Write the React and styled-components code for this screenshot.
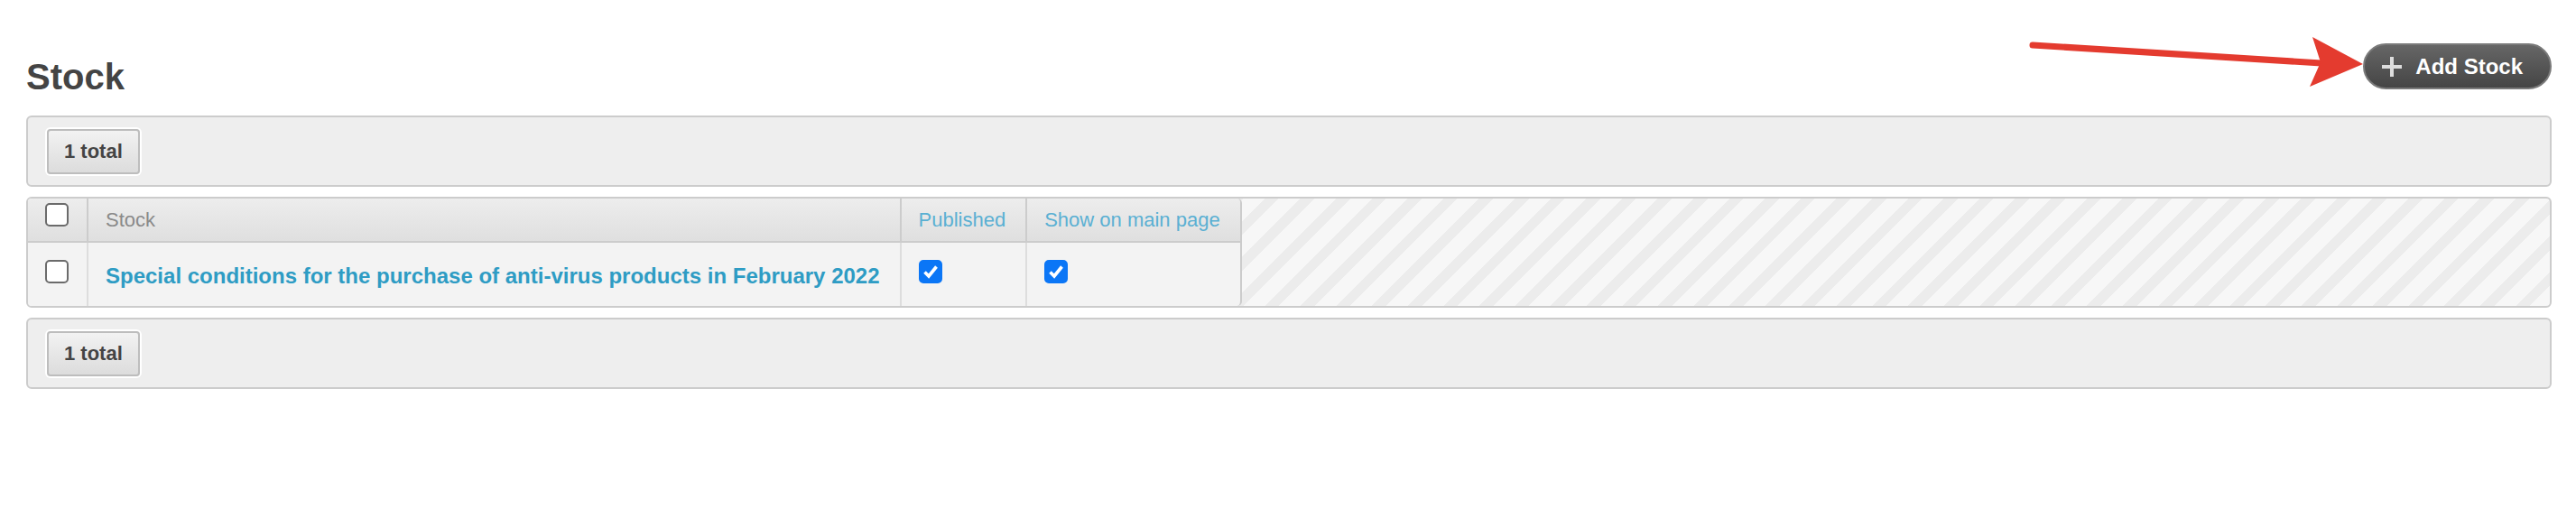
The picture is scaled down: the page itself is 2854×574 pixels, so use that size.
import React from "react"
import styled, { createGlobalStyle } from "styled-components"

const GlobalStyle = createGlobalStyle`
  body {
    margin: 0;
    background: #fff;
    font-family: "Liberation Sans", Arial, Helvetica, sans-serif;
  }
`

const Page = styled.div`
  position: relative;
  padding: 48px 27px 40px 29px;
  display: flex;
  flex-direction: column;
  gap: 11px;
`

const Header = styled.div`
  display: flex;
  justify-content: space-between;
  align-items: flex-start;
  margin-bottom: 8px;
`

const Title = styled.h1`
  margin: 13px 0 0;
  font-size: 40px;
  line-height: 48px;
  font-weight: bold;
  color: #444;
`

const AddButton = styled.button`
  display: flex;
  align-items: center;
  gap: 14px;
  height: 51px;
  padding: 0 30px 0 18px;
  border: 2px solid #7a7a7a;
  border-radius: 26px;
  background: linear-gradient(#666, #454545);
  color: #fff;
  font-family: inherit;
  font-size: 24px;
  font-weight: bold;
  cursor: pointer;
`

const Arrow = styled.svg`
  position: absolute;
  left: 2240px;
  top: 30px;
  pointer-events: none;
`

const Toolbar = styled.div`
  border: 2px solid #ccc;
  border-radius: 6px;
  background: #eee;
  padding: 13px 21px 12px;
`

const TotalButton = styled.button`
  height: 50px;
  padding: 0 17px;
  border: 2px solid #bdbdbd;
  border-radius: 4px;
  background: linear-gradient(#f2f2f2, #dcdcdc);
  box-shadow: 0 0 0 2px #fff;
  color: #444;
  font-family: inherit;
  font-size: 22px;
  font-weight: bold;
`

const Grid = styled.div`
  border: 2px solid #ccc;
  border-radius: 6px;
  overflow: hidden;
  background: repeating-linear-gradient(135deg, #f7f7f7 0 17px, #ececec 17px 28px);
`

const Table = styled.table`
  border-collapse: separate;
  border-spacing: 0;
  background: #f3f3f3;
  border-right: 2px solid #ccc;
  border-radius: 0 5px 5px 0;
  overflow: hidden;
`

const Th = styled.th`
  box-sizing: border-box;
  height: 49px;
  padding: ${(p) => (p.$box ? "5px 20px 0 19px" : "0 22px 0 19px")};
  vertical-align: ${(p) => (p.$box ? "top" : "middle")};
  background: linear-gradient(#ededed, #dfdfdf);
  border-bottom: 2px solid #ccc;
  border-left: ${(p) => (p.$box ? "none" : "2px solid #ccc")};
  text-align: left;
  font-size: 22px;
  font-weight: normal;
  white-space: nowrap;
  color: ${(p) => (p.$sortable ? "#5ab0d3" : "#8a8a8a")};
`

const Td = styled.td`
  box-sizing: border-box;
  height: 70px;
  padding: ${(p) => (p.$box ? "19px 20px 0 19px" : "3px 22px 0 19px")};
  vertical-align: ${(p) => (p.$box ? "top" : "middle")};
  border-left: ${(p) => (p.$first ? "none" : "2px solid #ddd")};
  white-space: nowrap;
`

const Link = styled.a`
  color: #2e9cc4;
  font-size: 24px;
  font-weight: bold;
  text-decoration: none;
`

const Box = styled.span`
  box-sizing: border-box;
  display: flex;
  align-items: center;
  justify-content: center;
  width: 26px;
  height: 26px;
  border: 2px solid ${(p) => (p.$checked ? "#0b76f6" : "#6b6b6b")};
  border-radius: 5px;
  background: ${(p) => (p.$checked ? "#0b76f6" : "#fff")};
`

const Checkbox = ({ checked }) => (
  <Box $checked={checked}>
    {checked && (
      <svg width="20" height="20" viewBox="0 0 20 20">
        <path d="M3.5 10.5 L8 15 L16.5 4.5" fill="none" stroke="#fff" strokeWidth="3.6" />
      </svg>
    )}
  </Box>
)

const Plus = () => (
  <svg width="24" height="24" viewBox="0 0 24 24">
    <rect x="10" y="1" width="4" height="22" fill="#ddd" />
    <rect x="1" y="10" width="22" height="4" fill="#ddd" />
  </svg>
)

export default function App() {
  return (
    <Page>
      <GlobalStyle />
      <Header>
        <Title>Stock</Title>
        <AddButton>
          <Plus />
          Add Stock
        </AddButton>
      </Header>
      <Arrow width="390" height="80" viewBox="2240 30 390 80">
        <line x1="2252" y1="50" x2="2572" y2="70" stroke="#e43b2f" strokeWidth="7" strokeLinecap="round" />
        <polygon points="2562,41 2618,71 2559,96 2571,69" fill="#e43b2f" />
      </Arrow>
      <Toolbar>
        <TotalButton>1 total</TotalButton>
      </Toolbar>
      <Grid>
        <Table>
          <thead>
            <tr>
              <Th $box>
                <Checkbox />
              </Th>
              <Th>Stock</Th>
              <Th $sortable>Published</Th>
              <Th $sortable>Show on main page</Th>
            </tr>
          </thead>
          <tbody>
            <tr>
              <Td $box $first>
                <Checkbox />
              </Td>
              <Td>
                <Link href="#">Special conditions for the purchase of anti-virus products in February 2022</Link>
              </Td>
              <Td $box>
                <Checkbox checked />
              </Td>
              <Td $box>
                <Checkbox checked />
              </Td>
            </tr>
          </tbody>
        </Table>
      </Grid>
      <Toolbar>
        <TotalButton>1 total</TotalButton>
      </Toolbar>
    </Page>
  )
}
